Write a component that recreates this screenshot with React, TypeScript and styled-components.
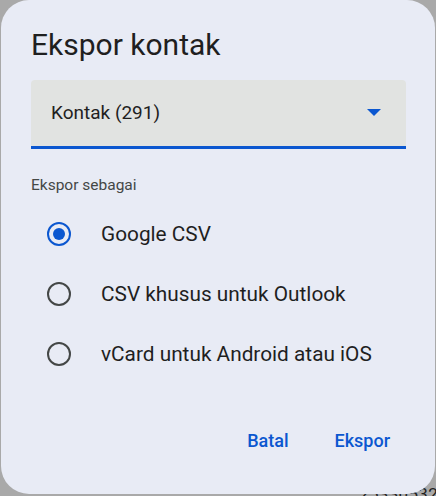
import React, { useState } from "react";
import styled, { createGlobalStyle } from "styled-components";

const GlobalStyle = createGlobalStyle`
  html, body {
    margin: 0;
    padding: 0;
    background: #a9a9a9;
  }
  * {
    box-sizing: border-box;
  }
`;

const formats = [
  "Google CSV",
  "CSV khusus untuk Outlook",
  "vCard untuk Android atau iOS",
];

const Backdrop = styled.div`
  position: relative;
  width: 436px;
  height: 496px;
  overflow: hidden;
  background: #a9a9a9;
  padding: 0 1px 2px 1px;
  font-family: Roboto, "Noto Sans", sans-serif;
`;

const BehindText = styled.span`
  position: absolute;
  right: -2px;
  bottom: -8px;
  font-size: 17px;
  color: #1f1f1f;
  letter-spacing: 0.3px;
`;

const Dialog = styled.div`
  position: relative;
  z-index: 1;
  width: 100%;
  height: 100%;
  background: #e8ebf5;
  border-radius: 28px;
  padding: 27px 29px 0 30px;
  display: flex;
  flex-direction: column;
`;

const Title = styled.h1`
  margin: 0;
  font-size: 30px;
  line-height: 36px;
  font-weight: 400;
  color: #1f1f1f;
`;

const Select = styled.div`
  margin-top: 17px;
  height: 69px;
  background: #e1e3e1;
  border-radius: 4px 4px 0 0;
  border-bottom: 3px solid #0b57d0;
  display: flex;
  align-items: center;
  justify-content: space-between;
  padding: 0 25px 2px 20px;
  font-size: 19px;
  color: #1f1f1f;
`;

const Caret = styled.svg`
  width: 14px;
  height: 7px;
  fill: #0b57d0;
`;

const Legend = styled.div`
  margin-top: 27px;
  font-size: 15.5px;
  color: #444746;
`;

const Options = styled.div`
  margin-top: 10px;
  display: flex;
  flex-direction: column;
`;

const Option = styled.label`
  height: 60px;
  display: flex;
  align-items: center;
  gap: 30px;
  padding-left: 16px;
  font-size: 20.8px;
  color: #1f1f1f;
  cursor: pointer;
`;

const Radio = styled.span<{ $checked: boolean }>`
  width: 24px;
  height: 24px;
  border-radius: 50%;
  border: 2.4px solid ${(p) => (p.$checked ? "#0b57d0" : "#444746")};
  display: flex;
  align-items: center;
  justify-content: center;

  &::after {
    content: "";
    width: 12px;
    height: 12px;
    border-radius: 50%;
    background: ${(p) => (p.$checked ? "#0b57d0" : "transparent")};
  }
`;

const Actions = styled.div`
  margin-top: auto;
  margin-bottom: 43px;
  display: flex;
  justify-content: flex-end;
  gap: 46px;
  padding-right: 16px;
`;

const TextButton = styled.button`
  border: none;
  background: none;
  padding: 0;
  font-family: inherit;
  font-size: 18px;
  font-weight: 500;
  color: #0b57d0;
  cursor: pointer;
`;

export default function App() {
  const [selected, setSelected] = useState(0);

  return (
    <>
      <GlobalStyle />
      <Backdrop>
        <BehindText>25330532</BehindText>
        <Dialog>
          <Title>Ekspor kontak</Title>
          <Select>
            <span>Kontak (291)</span>
            <Caret viewBox="0 0 14 7">
              <path d="M0 0h14L7 7z" />
            </Caret>
          </Select>
          <Legend>Ekspor sebagai</Legend>
          <Options>
            {formats.map((label, i) => (
              <Option key={label} onClick={() => setSelected(i)}>
                <Radio $checked={selected === i} />
                <span>{label}</span>
              </Option>
            ))}
          </Options>
          <Actions>
            <TextButton>Batal</TextButton>
            <TextButton>Ekspor</TextButton>
          </Actions>
        </Dialog>
      </Backdrop>
    </>
  );
}
